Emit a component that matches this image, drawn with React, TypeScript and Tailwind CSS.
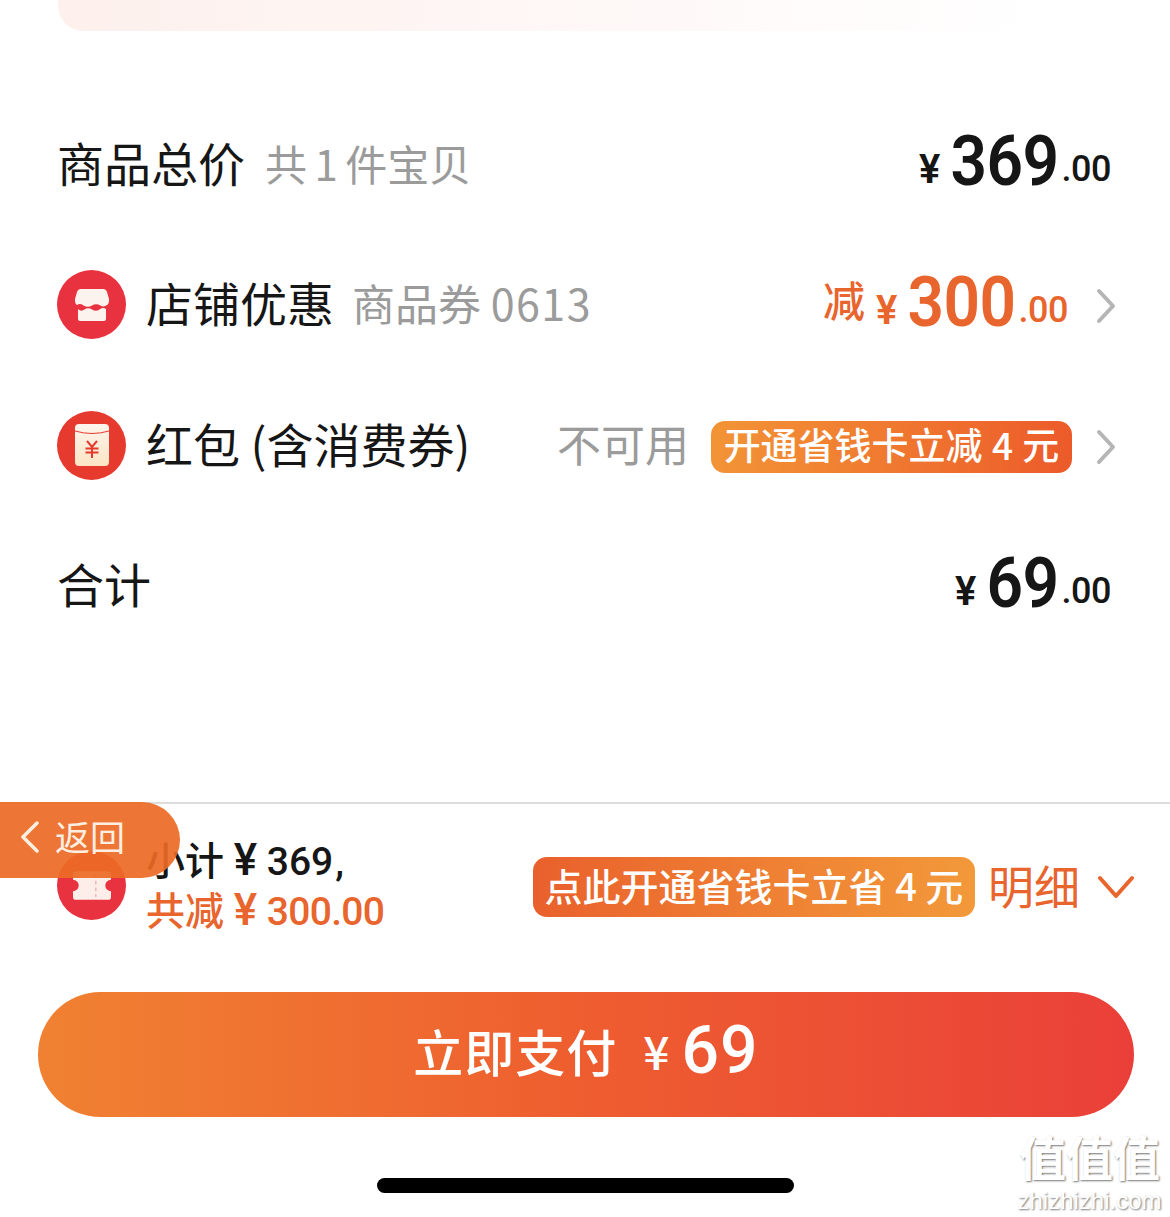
const cjk = "font-['Noto_Sans_CJK_SC','Noto_Sans',sans-serif]";

function Chevron({ className }: { className: string }) {
  return (
    <svg viewBox="2 0 20 36" className={className} fill="none" stroke="currentColor" strokeWidth="4" strokeLinecap="round" strokeLinejoin="round">
      <path d="M5 3 L19 18 L5 33" />
    </svg>
  );
}

function Price({ value }: { value: string }) {
  return (
    <div className="flex items-baseline font-['Roboto',sans-serif] font-semibold">
      <span className="text-[40px] mr-[10px]">¥</span>
      <span className="text-[64px] leading-none tracking-[-0.5px] scale-y-110">{value}</span>
      <span className="text-[36px] tracking-[-0.5px] ml-[3px] font-medium -translate-y-[2px]">.00</span>
    </div>
  );
}

function StoreIcon() {
  return (
    <div className="w-[69px] h-[69px] rounded-full bg-[#e8323f] flex items-center justify-center shrink-0 -translate-y-[1px]">
      <svg viewBox="0 0 34 32" className="w-[34px] h-[32px]">
        <path d="M6 0 H28 Q31 0 32 3 L34 10 Q34.5 14 32 16 Q28.5 18.5 25.5 16.5 Q21 14 17 16.5 Q13 19 8.5 16.5 Q5 14 2 16 Q-.5 14 0 10 L2 3 Q3 0 6 0 Z" fill="#fdf3ee" />
        <path d="M3 20 Q6 23 9.5 20.5 Q13 18 17 20.5 Q21 23 24.5 20.5 Q28 18 31 20 V30 Q31 32 29 32 H5 Q3 32 3 30 Z" fill="#fdf3ee" />
      </svg>
    </div>
  );
}

function PacketIcon() {
  return (
    <div className="w-[69px] h-[69px] rounded-full bg-[#e63a2e] flex items-center justify-center shrink-0 -translate-y-[1px]">
      <svg viewBox="0 0 34 42" className="w-[34px] h-[42px]">
        <defs>
          <linearGradient id="pk" x1="0" y1="0" x2="0" y2="1">
            <stop offset="0" stopColor="#fdf4ec" />
            <stop offset="1" stopColor="#fbe5c4" />
          </linearGradient>
        </defs>
        <rect x="0" y="0" width="34" height="42" rx="4" fill="url(#pk)" />
        <path d="M0 7 Q17 12 34 7" fill="none" stroke="#e63a2e" strokeWidth="1" />
        <path d="M12 17 L17 23 L22 17 M10.5 24.5 H23.5 M10.5 28.5 H23.5 M17 23 V34" fill="none" stroke="#e63a2e" strokeWidth="2" />
      </svg>
    </div>
  );
}

function TicketIcon() {
  return (
    <div className="w-[69px] h-[69px] rounded-full bg-[#e8323f] flex items-center justify-center shrink-0">
      <svg viewBox="0 0 40 30" className="w-[38px] h-[29px]">
        <path d="M3 0 H37 Q40 0 40 3 V9 A6 6 0 0 0 40 21 V27 Q40 30 37 30 H3 Q0 30 0 27 V21 A6 6 0 0 0 0 9 V3 Q0 0 3 0 Z" fill="#fdeeea" />
        <path d="M24 3 V27" stroke="#e8b8b4" strokeWidth="1.5" strokeDasharray="4 3" />
      </svg>
    </div>
  );
}

export default function App() {
  return (
    <div className={`relative w-[1170px] h-[1217px] overflow-hidden bg-white text-[#161616] ${cjk}`}>
      <div className="ml-[58px] h-[31px] rounded-bl-[26px] bg-gradient-to-r from-[#fdf0ed] to-white to-90%" />

      <div className="pl-[57px] pr-[54px] pt-[64px]">
        <div className="flex items-center justify-between h-[140px]">
          <div className="flex items-center -translate-y-[3px]">
            <span className="text-[47px]">商品总价</span>
            <span className="text-[42px] text-[#9b9b9b] ml-[20px] [word-spacing:-2px]">共 1 件宝贝</span>
          </div>
          <div className="pr-[5px]">
            <Price value="369" />
          </div>
        </div>

        <div className="flex items-center justify-between h-[141px]">
          <div className="flex items-center">
            <StoreIcon />
            <span className="text-[47px] ml-[20px] -translate-y-[3px]">店铺优惠</span>
            <span className="text-[43px] text-[#9b9b9b] ml-[18px] -translate-y-[3px]">
              商品券 <span className="tracking-[1.5px]">0613</span>
            </span>
          </div>
          <div className="flex items-center">
            <div className="flex items-baseline text-[#e8652d]">
              <span className="text-[42px] font-medium mr-[11px] -translate-y-[7px]">减</span>
              <Price value="300" />
            </div>
            <Chevron className="w-[20px] h-[36px] text-[#b5b5b5] ml-[28px]" />
          </div>
        </div>

        <div className="flex items-center justify-between h-[140px]">
          <div className="flex items-center">
            <PacketIcon />
            <span className="text-[47px] ml-[20px] -translate-y-[3px]">红包 (含消费券)</span>
          </div>
          <div className="flex items-center">
            <span className="text-[44px] text-[#9b9b9b] -translate-y-[3px]">不可用</span>
            <span className="ml-[22px] w-[361px] h-[52px] rounded-[14px] bg-gradient-to-r from-[#f29436] to-[#ec5a2a] text-white text-[37px] font-medium [word-spacing:1px] flex items-center justify-center whitespace-nowrap pb-[5px] translate-y-[1px]">
              开通省钱卡立减 4 元
            </span>
            <Chevron className="w-[20px] h-[36px] text-[#b5b5b5] ml-[24px] translate-y-[1px]" />
          </div>
        </div>

        <div className="flex items-center justify-between h-[141px]">
          <span className="text-[47px] -translate-y-[3px]">合计</span>
          <div className="pr-[5px]">
            <Price value="69" />
          </div>
        </div>
      </div>

      <div className="mt-[145px] border-t-2 border-[#dcdcdc] pl-[57px] pr-[36px] pt-[31px] flex items-center justify-between">
        <div className="flex items-center">
          <TicketIcon />
          <div className="ml-[20px] text-[39px] leading-[50px] font-medium translate-y-[2px] font-['Roboto','Noto_Sans_CJK_SC',sans-serif]">
            <div>小计 <span className="text-[44px] leading-none">¥</span> 369<span className="ml-[2px]">,</span></div>
            <div className="text-[#e8652d]">共减 <span className="text-[44px] leading-none">¥</span> <span className="tracking-[-0.7px]">300.00</span></div>
          </div>
        </div>
        <div className="flex items-center">
          <span className="w-[442px] h-[60px] rounded-[14px] bg-gradient-to-r from-[#e9602c] to-[#f2993a] text-white text-[38px] font-medium flex items-center justify-center whitespace-nowrap translate-y-[2px] pb-[6px]">
            点此开通省钱卡立省 4 元
          </span>
          <span className="text-[46px] text-[#e8652d] ml-[13px] -translate-y-[1px]">明细</span>
          <svg viewBox="0 0 36 24" className="w-[36px] h-[24px] ml-[18px] text-[#e8652d] translate-y-[2px]" fill="none" stroke="currentColor" strokeWidth="4" strokeLinecap="round" strokeLinejoin="round">
            <path d="M2 3 L18 21 L34 3" />
          </svg>
        </div>
      </div>

      <div className="ml-[38px] mr-[36px] mt-[57px] h-[125px] rounded-full bg-gradient-to-r from-[#f08132] via-[#ee5d2f] to-[#ea3f39] text-white flex items-center justify-center font-medium">
        <span className="text-[50px] tracking-[1px] -translate-y-[4px]">立即支付</span>
        <span className="text-[46px] ml-[26px] mr-[12px] -translate-y-[4px]">¥</span>
        <span className="text-[66px] font-['Roboto',sans-serif] tracking-[1px] -translate-y-[4px]">69</span>
      </div>

      <div className="mx-auto mt-[61px] w-[417px] h-[15px] rounded-full bg-black" />

      <div className="absolute left-0 top-[802px] w-[180px] h-[76px] rounded-r-[38px] bg-[#ec6a25]/92 flex items-center text-[#fdeee2] pl-[20px]">
        <svg viewBox="0 0 20 32" className="w-[20px] h-[32px] -translate-y-[3px]" fill="none" stroke="currentColor" strokeWidth="3.5" strokeLinecap="round" strokeLinejoin="round">
          <path d="M17 2 L3 16 L17 30" />
        </svg>
        <span className="text-[35px] ml-[15px] -translate-y-[4px]">返回</span>
      </div>

      <div className="absolute left-[1017px] top-[1126px] w-[145px] text-center text-white [text-shadow:1px_1px_2px_#777] select-none font-bold">
        <div className="text-[47px] leading-[60px] whitespace-nowrap">值值值</div>
        <div className="mt-[3px] text-[24px] leading-[24px] whitespace-nowrap font-['Liberation_Sans',sans-serif] font-normal">zhizhizhi.com</div>
      </div>
    </div>
  );
}
